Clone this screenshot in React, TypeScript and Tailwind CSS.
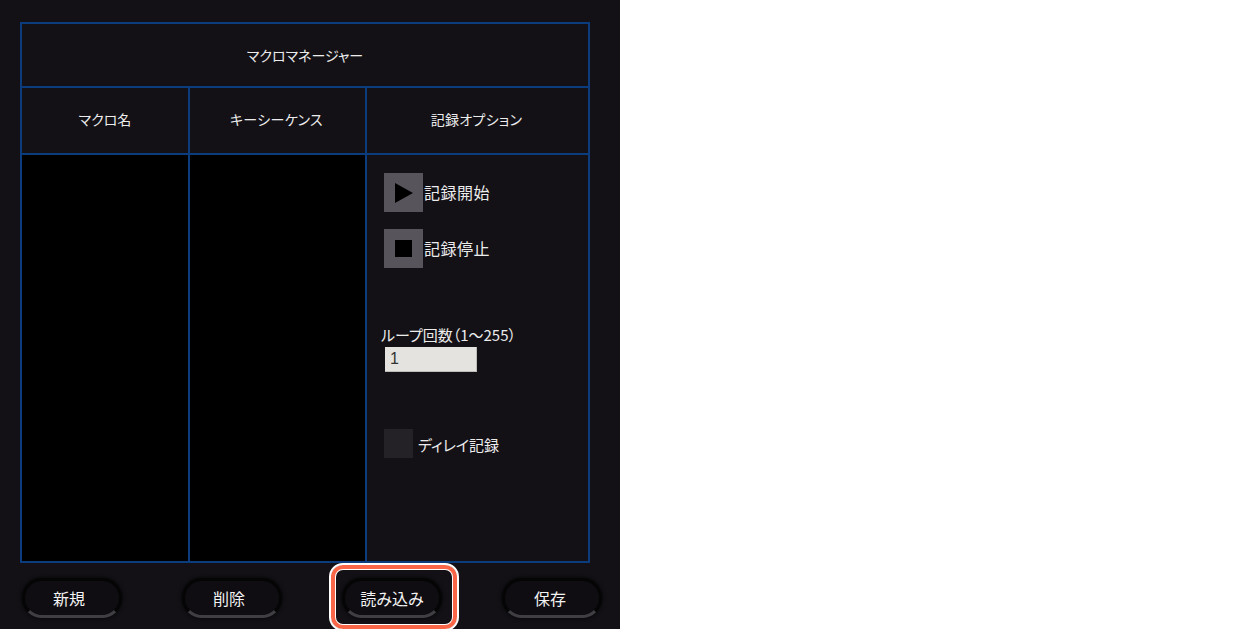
const FONT = "font-['Noto_Sans_CJK_JP','Liberation_Sans',sans-serif] [font-feature-settings:'palt']";

function PillButton({ label, inset }: { label: string; inset: string }) {
  return (
    <div
      className={`flex h-[40px] w-[100px] items-center justify-center rounded-[20px] border-[3px] border-[#060506] border-b-[#403e42] bg-[#0f0d11] text-[16px] text-[#f2f2f2] shadow-[0_0_4px_#000] ${inset}`}
    >
      {label}
    </div>
  );
}

function IconButton({ children }: { children: React.ReactNode }) {
  return (
    <div className="flex h-[39px] w-[39px] items-center justify-center bg-[#57545b]">
      {children}
    </div>
  );
}

export default function App() {
  return (
    <div className={`relative h-[634px] w-[1240px] overflow-hidden bg-white ${FONT}`}>
      <div className="h-[629px] w-[620px] bg-[#131116] pl-[20px] pt-[22px]">
        <div className="grid h-[541px] w-[570px] grid-cols-[168px_177px_1fr] grid-rows-[64px_67px_1fr] border-2 border-[#0a3c7e] text-[#ececec]">
          <div className="col-span-3 flex items-center justify-center border-b-2 border-[#0a3c7e] text-[14px]">
            マクロマネージャー
          </div>
          <div className="flex items-center justify-center border-b-2 border-r-2 border-[#0a3c7e] pb-[2px] text-[14px]">
            マクロ名
          </div>
          <div className="flex items-center justify-center border-b-2 border-r-2 border-[#0a3c7e] pb-[2px] pr-[2px] text-[14px] tracking-[0.3px]">
            キーシーケンス
          </div>
          <div className="flex items-center justify-center border-b-2 border-[#0a3c7e] pb-[2px] pr-[2px] text-[14px] tracking-[0.3px]">
            記録オプション
          </div>
          <div className="border-r-2 border-[#0a3c7e] bg-black" />
          <div className="border-r-2 border-[#0a3c7e] bg-black" />
          <div className="flex flex-col pl-[14px] pt-[18px]">
            <div className="flex items-center gap-[1px] pl-[3px]">
              <IconButton>
                <svg width="20" height="22" viewBox="0 0 20 22">
                  <path d="M1 1 L19 11 L1 21 Z" fill="#000" />
                </svg>
              </IconButton>
              <span className="pb-[1px] text-[16px] tracking-[0.5px]">記録開始</span>
            </div>
            <div className="mt-[17px] flex items-center gap-[1px] pl-[3px]">
              <IconButton>
                <div className="h-[17px] w-[17px] bg-black" />
              </IconButton>
              <span className="pb-[1px] text-[16px] tracking-[0.5px]">記録停止</span>
            </div>
            <div className="mt-[57px] h-[22px] whitespace-nowrap text-[15px] leading-[20px]">
              ループ回数（1～255）
            </div>
            <div className="ml-[4px] flex h-[25px] w-[92px] items-center border-b border-r border-[#bdbcb8] bg-[#e4e3df] pl-[5px] font-['Liberation_Sans',sans-serif] text-[16px] text-[#333]">
              1
            </div>
            <div className="mt-[57px] flex items-center gap-[5px] pl-[3px]">
              <div className="h-[29px] w-[29px] bg-[#242127]" />
              <span className="pt-[3px] text-[15px]">ディレイ記録</span>
            </div>
          </div>
        </div>
        <div className="mt-[15px] flex gap-[60px] pl-[2px]">
          <PillButton label="新規" inset="pr-[6px]" />
          <PillButton label="削除" inset="pr-[6px]" />
          <PillButton label="読み込み" inset="pr-0" />
          <PillButton label="保存" inset="pr-[4px]" />
        </div>
      </div>
      {/* highlight round the load button */}
      <div className="absolute left-[329px] top-[563px] h-[68px] w-[130px] rounded-[14px] border-[2px] border-white shadow-[inset_0_0_0_4px_#fa6748,inset_0_0_0_5px_#fff]" />
    </div>
  );
}
